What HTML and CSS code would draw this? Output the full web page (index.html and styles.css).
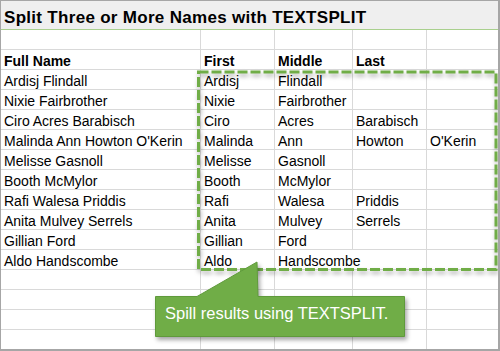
FILE: index.html
```html
<!DOCTYPE html>
<html>
<head>
<meta charset="utf-8">
<link rel="stylesheet" href="styles.css">
</head>
<body>
<div class="sheet">
  <div class="title">Split Three or More Names with TEXTSPLIT</div>
  <div class="grid">
    <div class="c"></div><div class="c"></div><div class="c"></div><div class="c"></div><div class="c e"></div>
    <div class="c h">Full Name</div><div class="c h">First</div><div class="c h">Middle</div><div class="c h">Last</div><div class="c e"></div>
    <div class="c">Ardisj Flindall</div><div class="c">Ardisj</div><div class="c">Flindall</div><div class="c"></div><div class="c e"></div>
    <div class="c">Nixie Fairbrother</div><div class="c">Nixie</div><div class="c">Fairbrother</div><div class="c"></div><div class="c e"></div>
    <div class="c">Ciro Acres Barabisch</div><div class="c">Ciro</div><div class="c">Acres</div><div class="c">Barabisch</div><div class="c e"></div>
    <div class="c">Malinda Ann Howton O'Kerin</div><div class="c">Malinda</div><div class="c">Ann</div><div class="c">Howton</div><div class="c e">O'Kerin</div>
    <div class="c">Melisse Gasnoll</div><div class="c">Melisse</div><div class="c">Gasnoll</div><div class="c"></div><div class="c e"></div>
    <div class="c">Booth McMylor</div><div class="c">Booth</div><div class="c">McMylor</div><div class="c"></div><div class="c e"></div>
    <div class="c">Rafi Walesa Priddis</div><div class="c">Rafi</div><div class="c">Walesa</div><div class="c">Priddis</div><div class="c e"></div>
    <div class="c">Anita Mulvey Serrels</div><div class="c">Anita</div><div class="c">Mulvey</div><div class="c">Serrels</div><div class="c e"></div>
    <div class="c">Gillian Ford</div><div class="c">Gillian</div><div class="c">Ford</div><div class="c"></div><div class="c e"></div>
    <div class="c">Aldo Handscombe</div><div class="c">Aldo</div><div class="c spill">Handscombe</div><div class="c"></div><div class="c e"></div>
    <div class="c"></div><div class="c"></div><div class="c"></div><div class="c"></div><div class="c e"></div>
    <div class="c"></div><div class="c"></div><div class="c"></div><div class="c"></div><div class="c e"></div>
    <div class="c"></div><div class="c"></div><div class="c"></div><div class="c"></div><div class="c e"></div>
    <div class="c"></div><div class="c"></div><div class="c"></div><div class="c"></div><div class="c e"></div>
  </div>
  <svg class="overlay" width="500" height="351" viewBox="0 0 500 351">
    <rect class="spill-rect" x="198.5" y="72" width="297.5" height="197.5"/>
    <path class="callout" d="M155.5 296.5 H197 L257 262 L258 296.5 H404.5 V336.5 H155.5 Z"/>
  </svg>
  <div class="callout-text">Spill results using TEXTSPLIT.</div>
</div>
</body>
</html>
```
FILE: styles.css
```css
html, body {
  margin: 0;
  padding: 0;
  background: #ffffff;
}
.sheet {
  position: relative;
  width: 500px;
  height: 351px;
  box-sizing: border-box;
  border-top: 1px solid #a6a6a6;
  border-left: 1px solid #a6a6a6;
  border-right: 2px solid #a6a6a6;
  border-bottom: 2px solid #a6a6a6;
  overflow: hidden;
  font-family: "Liberation Sans", Arial, sans-serif;
  color: #000;
}
.title {
  height: 29px;
  box-sizing: border-box;
  border-bottom: 1px solid #a9d08e;
  background: #efefef;
  padding: 5px 0 0 3px;
  font-size: 17px;
  font-weight: bold;
  line-height: 24px;
  letter-spacing: 0.3px;
  white-space: nowrap;
}
.grid {
  display: grid;
  grid-template-columns: 200px 74px 78px 74px 1fr;
  grid-auto-rows: 20px;
}
.c {
  box-sizing: border-box;
  border-right: 1px solid #d9d9d9;
  border-bottom: 1px solid #d9d9d9;
  padding: 1px 0 0 3px;
  font-size: 14px;
  line-height: 20px;
  white-space: nowrap;
  min-width: 0;
}
.c.e {
  border-right: none;
}
.c.h {
  font-weight: bold;
}
.c.spill {
  border-right-color: transparent;
  overflow: visible;
}
.overlay {
  position: absolute;
  left: -1px;
  top: -1px;
}
.spill-rect {
  fill: none;
  stroke: #70ad47;
  stroke-width: 3;
  stroke-dasharray: 10 3;
  filter: drop-shadow(1px 3px 2px rgba(0, 0, 0, 0.3));
}
.callout {
  fill: #70ad47;
  stroke: #5f9a3b;
  stroke-width: 1;
  filter: drop-shadow(2px 3px 2px rgba(0, 0, 0, 0.35));
}
.callout-text {
  position: absolute;
  left: 154px;
  top: 295px;
  width: 250px;
  height: 41px;
  box-sizing: border-box;
  padding-left: 10px;
  color: #ffffff;
  font-size: 16.5px;
  line-height: 35px;
  white-space: nowrap;
}
```
